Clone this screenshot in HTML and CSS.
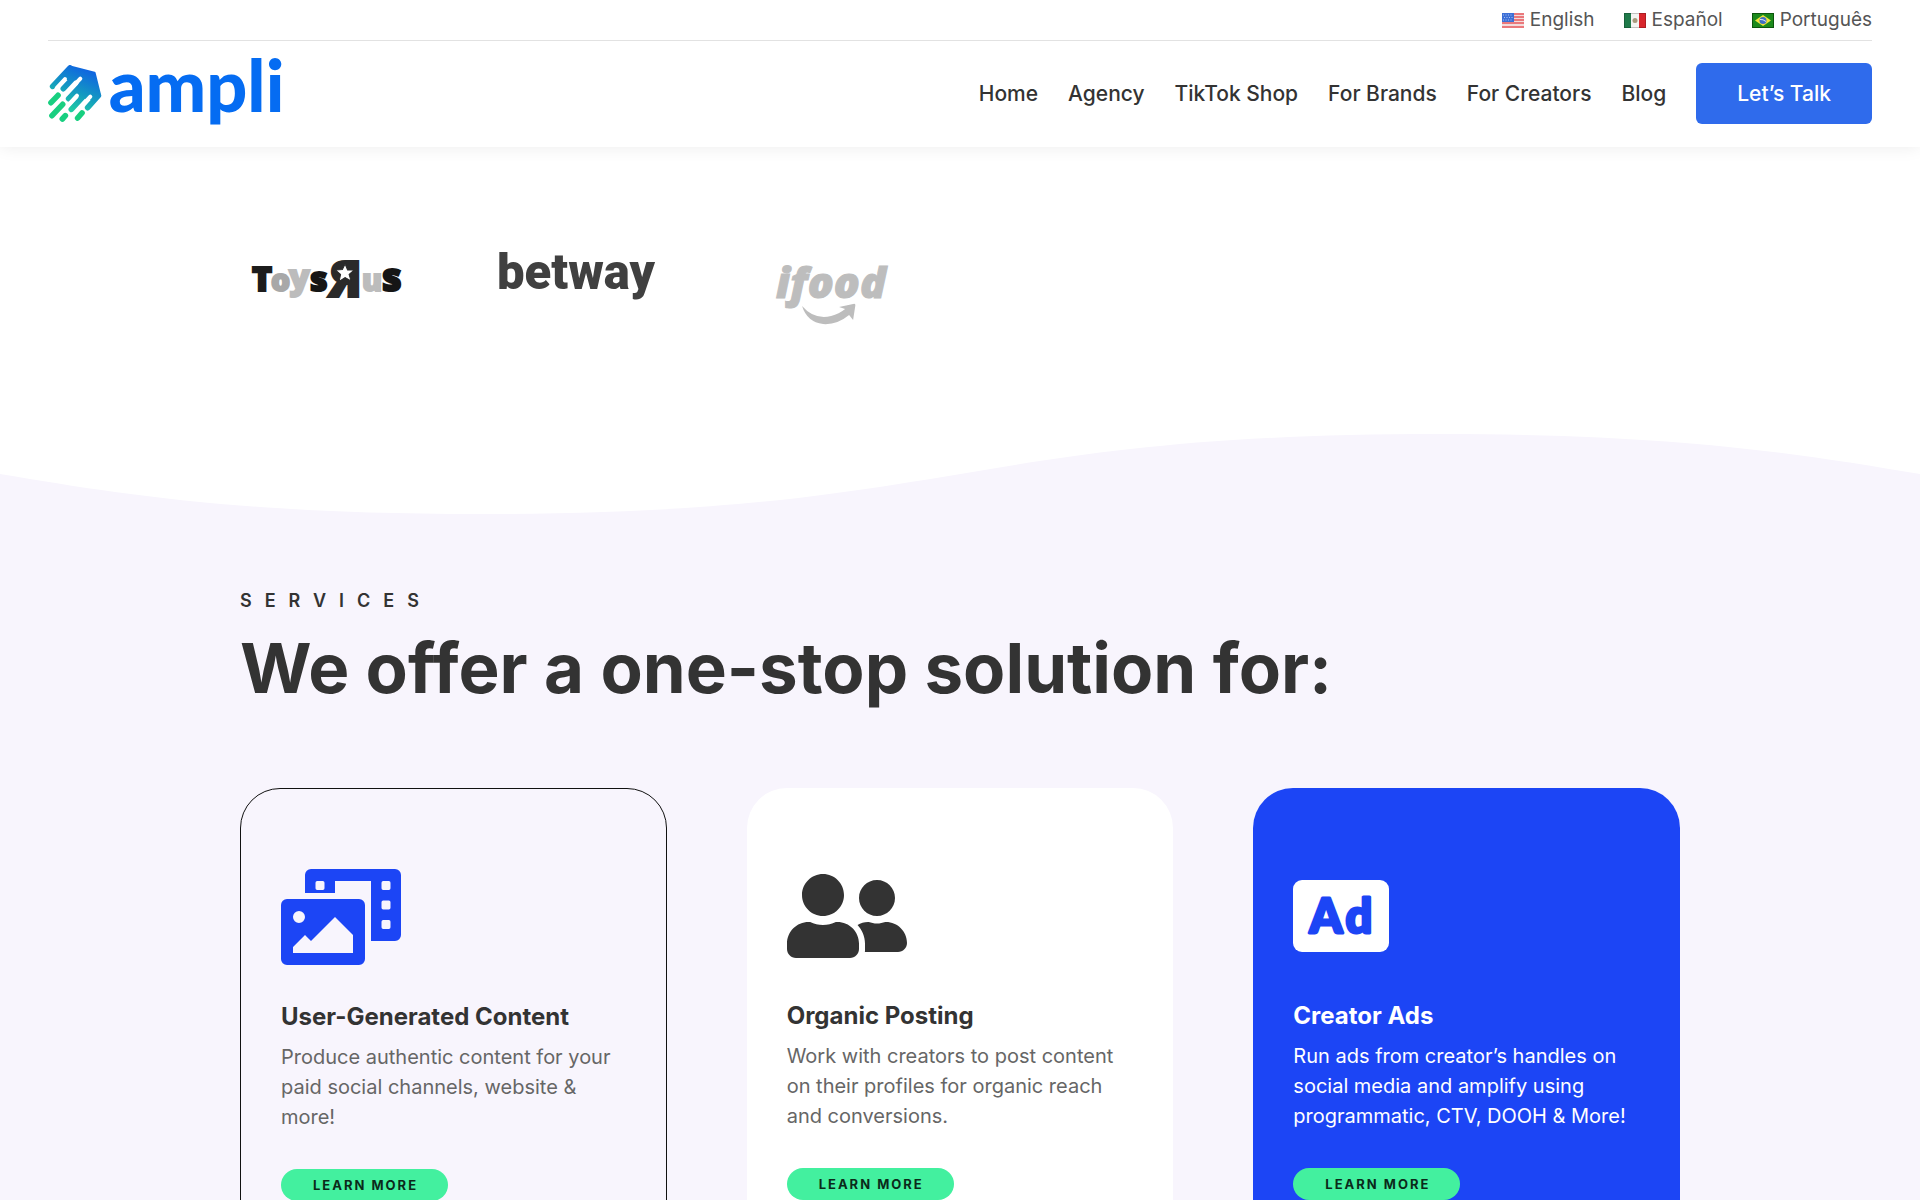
FILE: index.html
```html
<!DOCTYPE html>
<html lang="en">
<head>
    <meta charset="UTF-8">
    <meta name="viewport" content="width=device-width, initial-scale=1.0">
    <title>Ampli</title>
    <link rel="stylesheet" href="styles.css">
</head>
<body>

<header class="site-header">
    <div class="languages">
        <a href="#en">
            <svg class="flag" viewBox="0 0 22 15" aria-hidden="true">
                <rect width="22" height="15" fill="#f3dcdc"/>
                <path d="M0 1h22M0 4h22M0 7h22M0 10h22M0 14h22" stroke="#e8585c" stroke-width="1.5"/>
                <rect width="12" height="9" fill="#3d6fd6"/>
                <path d="M1 2h10M2 4.500h9M1 7h10" stroke="#a9c2f2" stroke-dasharray="1 1.500"/>
            </svg>
            English
        </a>
        <a href="#es">
            <svg class="flag" viewBox="0 0 22 15" aria-hidden="true">
                <rect width="22" height="15" fill="#f4f4f2"/>
                <rect width="7" height="15" fill="#1f7a4a"/>
                <rect x="15" width="7" height="15" fill="#d8262c"/>
                <circle cx="11" cy="7.500" r="2.500" fill="#a79a7c"/>
                <rect x=".5" y=".5" width="21" height="14" fill="none" stroke="#000" stroke-opacity=".2"/>
            </svg>
            Español
        </a>
        <a href="#pt">
            <svg class="flag" viewBox="0 0 22 15" aria-hidden="true">
                <rect width="22" height="15" fill="#1c8a1c"/>
                <path d="M11 2l8 5.500-8 5.500-8-5.500z" fill="#f0e43c"/>
                <circle cx="11" cy="7.500" r="3.500" fill="#3f6fc4"/>
                <path d="M8 6.500q3-.5 6 2" fill="none" stroke="#dfe8f6"/>
                <rect x=".5" y=".5" width="21" height="14" fill="none" stroke="#063f06" stroke-opacity=".7"/>
            </svg>
            Português
        </a>
    </div>

    <div class="main-bar">
        <a class="brand" href="#home" aria-label="ampli">
            <svg viewBox="54 42 720 234" aria-hidden="true">
                <defs>
                    <linearGradient id="mark" gradientUnits="userSpaceOnUse" x1="170" y1="90" x2="110" y2="225">
                        <stop offset="0" stop-color="#0f66e0"/>
                        <stop offset=".5" stop-color="#149bc0"/>
                        <stop offset=".9" stop-color="#1fd0a0"/>
                    </linearGradient>
                </defs>
                <path d="M120 80L193 99L209 164L182 176L143 168L152 118L107 116Z" fill="url(#mark)" stroke="url(#mark)" stroke-width="8" stroke-linejoin="round"/>
                <path d="M68 139L120 84M100 146L140 103M116 176L170 118M124 208L185 142M173 203L205 167" stroke="url(#mark)" stroke-width="17" stroke-linecap="round"/>
                <path d="M105 117L80 144M151 116L108 162M141 167L116 194M181 170L150 203" stroke="#fff" stroke-width="12" stroke-linecap="round"/>
                <path d="M84 166L63 188M98 193L66 227M106 227L97 237M156 219L143 234" stroke="#18cf80" stroke-width="17" stroke-linecap="round"/>
                <text class="brand-name" x="236" y="216">ampli</text>
            </svg>
        </a>

        <nav>
            <a href="#home">Home</a>
            <a href="#agency">Agency</a>
            <a href="#shop">TikTok Shop</a>
            <a href="#brands">For Brands</a>
            <a href="#creators">For Creators</a>
            <a href="#blog">Blog</a>
            <a class="talk" href="#talk">Let’s Talk</a>
        </nav>
    </div>
</header>

<section class="clients">
    <div class="client-row">
        <svg viewBox="0 0 174 100" role="img" aria-label="Toys R Us">
            <g class="toys">
                <text x="12" y="47" font-size="34" fill="#1c1c1c" stroke="#1c1c1c">T</text>
                <text x="31" y="47" font-size="30" fill="#a8a8a8" stroke="#a8a8a8">o</text>
                <text x="49" y="45" font-size="34" fill="#bcbcbc" stroke="#bcbcbc">y</text>
                <text x="70" y="47" font-size="34" fill="#151515" stroke="#151515">s</text>
                <text x="-122" y="53" font-size="50" fill="#2a2a2a" stroke="#2a2a2a" transform="scale(-1 1)">R</text>
                <text x="122" y="47" font-size="30" fill="#bcbcbc" stroke="#bcbcbc">u</text>
                <text x="142" y="47" font-size="38" fill="#151515" stroke="#151515">s</text>
            </g>
            <path d="M105 20l2.500 6 6.500 0-5 4.500 2 6.500-6-3.500-6 4 1.500-7-5-4.500 6.800-.5z" fill="#fff" stroke="#2a2a2a"/>
        </svg>
        <svg viewBox="0 0 174 100" role="img" aria-label="betway">
            <text class="betway" x="4" y="45">betway</text>
        </svg>
        <svg viewBox="0 0 174 100" role="img" aria-label="ifood">
            <text class="ifood" x="30" y="54">ifood</text>
            <path d="M56 62q12 14 29 10q8-2 14-7l-6-2 14-3q3-1 2 3l-2 13-4-5q-12 10-26 9-16-2-21-18z" fill="#bdbdbd"/>
        </svg>
    </div>
</section>

<svg class="wave" viewBox="0 0 1280 84" preserveAspectRatio="none" aria-hidden="true">
    <path d="M0 42C80 63 160 84 320 84C640 84 640 0 960 0C1120 0 1200 21 1280 42V84H0z"/>
</svg>

<section class="services">
    <p class="eyebrow">SERVICES</p>
    <h1>We offer a one-stop solution for:</h1>

    <div class="cards">
        <article class="card card-outline">
            <svg class="icon" viewBox="0 0 640 512" aria-hidden="true">
                <path d="M608 0H160a32 32 0 0 0-32 32v96h160V64h192v320h128a32 32 0 0 0 32-32V32a32 32 0 0 0-32-32zM232 103a9 9 0 0 1-9 9h-30a9 9 0 0 1-9-9V73a9 9 0 0 1 9-9h30a9 9 0 0 1 9 9zm352 208a9 9 0 0 1-9 9h-30a9 9 0 0 1-9-9v-30a9 9 0 0 1 9-9h30a9 9 0 0 1 9 9zm0-104a9 9 0 0 1-9 9h-30a9 9 0 0 1-9-9v-30a9 9 0 0 1 9-9h30a9 9 0 0 1 9 9zm0-104a9 9 0 0 1-9 9h-30a9 9 0 0 1-9-9V73a9 9 0 0 1 9-9h30a9 9 0 0 1 9 9zm-168 57H32a32 32 0 0 0-32 32v288a32 32 0 0 0 32 32h384a32 32 0 0 0 32-32V192a32 32 0 0 0-32-32zM96 224a32 32 0 1 1-32 32 32 32 0 0 1 32-32zm288 224H64v-32l64-64 32 32 128-128 96 96z"/>
            </svg>
            <h2>User-Generated Content</h2>
            <p>Produce authentic content for your paid social channels, website &amp; more!</p>
            <a class="learn" href="#ugc">LEARN MORE</a>
        </article>

        <article class="card card-white">
            <svg class="icon" viewBox="0 0 640 512" aria-hidden="true">
                <path d="M192 256c61.9 0 112-50.1 112-112S253.9 32 192 32 80 82.1 80 144s50.1 112 112 112zm76.8 32h-8.3c-20.8 10-43.9 16-68.5 16s-47.6-6-68.5-16h-8.3C51.6 288 0 339.6 0 403.2V432c0 26.5 21.5 48 48 48h288c26.5 0 48-21.5 48-48v-28.8c0-63.6-51.6-115.2-115.2-115.2zM480 256c53 0 96-43 96-96s-43-96-96-96-96 43-96 96 43 96 96 96zm48 32h-3.8c-13.9 4.8-28.6 8-44.2 8s-30.3-3.2-44.2-8H432c-20.4 0-39.2 5.9-55.7 15.4 24.4 26.3 39.7 61.2 39.7 99.8v38.4c0 2.2-.5 4.3-.6 6.4H592c26.5 0 48-21.5 48-48 0-61.9-50.1-112-112-112z"/>
            </svg>
            <h2>Organic Posting</h2>
            <p>Work with creators to post content on their profiles for organic reach and conversions.</p>
            <a class="learn" href="#organic">LEARN MORE</a>
        </article>

        <article class="card card-blue">
            <svg class="icon" viewBox="0 0 640 512" role="img" aria-label="Ad">
                <rect y="64" width="512" height="384" rx="48"/>
                <text class="ad-text" y="346"><tspan x="88">A</tspan><tspan x="280">d</tspan></text>
            </svg>
            <h2>Creator Ads</h2>
            <p>Run ads from creator’s handles on social media and amplify using programmatic, CTV, DOOH &amp; More!</p>
            <a class="learn" href="#ads">LEARN MORE</a>
        </article>
    </div>
</section>

</body>
</html>
```
FILE: styles.css
```css
* {
    margin: 0;
    padding: 0;
    box-sizing: border-box;
}

body {
    font-family: Inter, "Liberation Sans", sans-serif;
    background-color: #fff;
    color: #333;
}

a {
    color: inherit;
    text-decoration: none;
}

/* Header */
.site-header {
    padding: 0 48px;
    background-color: #fff;
    box-shadow: 0 0 16px rgba(0, 0, 0, 0.08);
}

.languages {
    display: flex;
    justify-content: flex-end;
    gap: 29px;
    height: 41px;
    border-bottom: 1px solid #e2e2e2;
    font-size: 19px;
    line-height: 40px;
    color: #555;
}

.languages a {
    display: flex;
    align-items: center;
    gap: 6px;
}

.flag {
    width: 22px;
    height: 15px;
}

.main-bar {
    display: flex;
    justify-content: space-between;
    align-items: center;
    height: 106px;
    padding-bottom: 2px;
}

.brand svg {
    display: block;
    width: 240px;
    height: 78px;
    overflow: visible;
}

.brand-name {
    font-family: Lato, sans-serif;
    font-size: 216px;
    font-weight: 900;
    fill: #056cf2;
}

nav {
    display: flex;
    align-items: center;
    gap: 30px;
    font-size: 21px;
    font-weight: 500;
}

.talk {
    padding: 18px 41px;
    border-radius: 6px;
    background-color: #2f6bec;
    color: #fff;
    line-height: 25px;
}

/* Client logos */
.clients {
    padding: 97px 12.5% 90px;
}

.client-row {
    display: grid;
    grid-template-columns: repeat(6, 1fr);
    column-gap: 79px;
}

.client-row svg {
    display: block;
    width: 100%;
    overflow: visible;
}

.toys {
    font-family: "Open Sans", sans-serif;
    font-weight: 800;
    stroke-width: 2px;
}

.betway {
    font-family: Roboto, sans-serif;
    font-size: 49px;
    font-weight: 900;
    fill: #404040;
}

.ifood {
    font-family: "Open Sans", sans-serif;
    font-size: 43px;
    font-weight: 800;
    font-style: italic;
    fill: #bdbdbd;
    stroke: #bdbdbd;
}

.wave {
    display: block;
    width: 100%;
    height: 80px;
    fill: #f8f5fd;
}

/* Services */
.services {
    padding: 72px 12.5% 80px;
    background-color: #f8f5fd;
}

.eyebrow {
    font-size: 18px;
    font-weight: 600;
    line-height: 30px;
    letter-spacing: 13px;
}

h1 {
    margin-top: 12px;
    font-size: 69px;
    font-weight: 700;
    line-height: 80px;
}

.cards {
    display: grid;
    grid-template-columns: repeat(3, 1fr);
    column-gap: 80px;
    margin-top: 80px;
}

.card {
    padding: 80px 40px;
    border-radius: 40px;
}

.card-outline {
    border: 1px solid #111;
}

.card-white {
    background-color: #fff;
}

.card-blue {
    background-color: #1c45f5;
    color: #fff;
}

.icon {
    display: block;
    width: 120px;
    height: 96px;
    fill: #333;
}

.card-outline .icon {
    fill: #1c45f5;
}

.card-blue .icon {
    fill: #fff;
}

.ad-text {
    font-family: Lato, sans-serif;
    font-size: 250px;
    font-weight: 900;
    fill: #1c45f5;
    stroke: #1c45f5;
    stroke-width: 16px;
    stroke-linejoin: round;
}

.card h2 {
    margin-top: 37px;
    font-size: 24px;
    font-weight: 700;
    line-height: 30px;
}

.card p {
    margin-top: 10px;
    font-size: 20px;
    line-height: 30px;
    color: #666;
}

.card-blue p {
    color: #fff;
}

.learn {
    display: inline-block;
    margin-top: 37px;
    padding: 0 30px 0 32px;
    border-radius: 16px;
    background-color: #43f09f;
    color: #0b2a1a;
    font-size: 13px;
    font-weight: 700;
    line-height: 32px;
    letter-spacing: 2px;
}
```
